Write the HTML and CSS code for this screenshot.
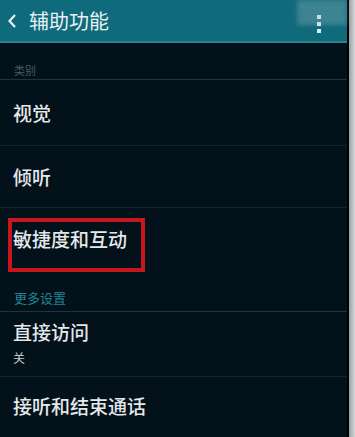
FILE: index.html
```html
<!DOCTYPE html>
<html>
<head lang="zh">
    <meta charset="UTF-8">
    <title>辅助功能</title>
    <link rel="stylesheet" href="styles.css">
</head>
<body>
<div class="screen">
    <div class="phone">
        <div class="topbar">
            <span class="back">
                <svg width="10" height="16" viewBox="0 0 10 16"><path d="M8 2 L2.5 8 L8 14" fill="none" stroke="#e8f2f4" stroke-width="2.2"/></svg>
            </span>
            <span class="title">辅助功能</span>
            <span class="menu"><i></i><i></i><i></i></span>
            <span class="mark"></span>
        </div>
        <div class="cat">类别</div>
        <div class="item h64">视觉</div>
        <div class="item h62">倾听</div>
        <div class="item hot"><span class="box">敏捷度和互动</span></div>
        <div class="cat teal">更多设置</div>
        <div class="item two">
            <div>直接访问</div>
            <div class="sub">关</div>
        </div>
        <div class="item last">接听和结束通话</div>
    </div>
    <div class="edge"></div>
</div>
</body>
</html>
```

FILE: styles.css
```css
*{
    margin:0;
    padding:0;
    box-sizing: border-box;
}
body{
    background: #03101a;
    font-family: "Noto Sans CJK SC", "Noto Sans", sans-serif;
    color: #e4e8ea;
    overflow: hidden;
}
.screen{
    display: flex;
    width: 355px;
    height: 437px;
}
.phone{
    width: 349px;
    background: #03111a;
    border-right: 2px solid #000;
}
.edge{
    width: 6px;
    background: linear-gradient(to right, #9aa0a2, #d6d8d8);
}
.topbar{
    position: relative;
    height: 43px;
    background: #0f6a7c;
    border-bottom: 2px solid #2a8293;
    display: flex;
    align-items: center;
    padding-left: 7px;
}
.back{
    display: flex;
    width: 22px;
}
.title{
    font-size: 20px;
    color: #e8f2f4;
}
.menu{
    margin-left: auto;
    margin-right: 26px;
    display: flex;
    flex-direction: column;
    gap: 3px;
    padding-top: 6px;
}
.menu i{
    display: block;
    width: 4px;
    height: 4px;
    background: #d8eef2;
}
.mark{
    position: absolute;
    right: 0;
    top: 0;
    width: 50px;
    height: 25px;
    background: rgba(170, 190, 195, 0.3);
    filter: blur(2px);
}
.cat{
    font-size: 11px;
    color: #4a5c64;
    padding: 0 14px 1px;
    height: 37px;
    display: flex;
    align-items: flex-end;
    border-bottom: 1px solid #1c3540;
}
.cat.teal{
    color: #1f8592;
    font-size: 13px;
    height: 40px;
    padding-bottom: 4px;
}
.item{
    font-size: 19px;
    font-weight: 500;
    padding: 0 13px;
    display: flex;
    align-items: center;
    border-bottom: 1px solid #13252e;
}
.h64{ height: 66px; }
.h62{ height: 62px; }
.hot{
    height: 64px;
    border-bottom: 0;
    align-items: flex-start;
    padding-top: 10px;
}
.box{
    display: inline-block;
    margin-left: -5px;
    border: 4px solid #c8161e;
    padding: 5px 14px 17px 1px;
    line-height: 24px;
}
.two{
    height: 65px;
    flex-direction: column;
    align-items: flex-start;
    justify-content: center;
    line-height: 24px;
    padding-top: 2px;
}
.two .sub{
    font-size: 12px;
    font-weight: 400;
    color: #c8cccd;
    margin-top: 2px;
}
.last{
    height: 56px;
    border-bottom: 0;
}
```
